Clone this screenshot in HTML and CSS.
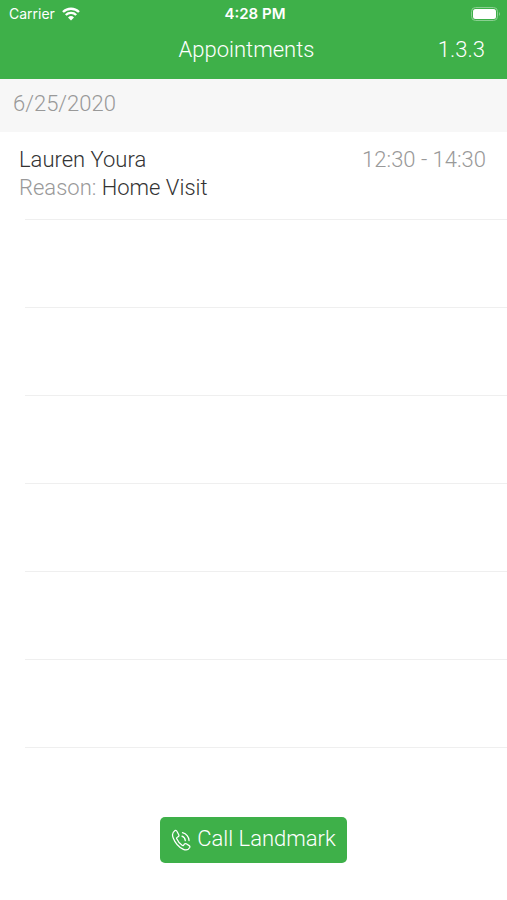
FILE: index.html
```html
<!DOCTYPE html>
<html lang="en">
<head>
  <meta charset="UTF-8" />
  <meta name="viewport" content="width=device-width, initial-scale=1.0" />
  <title>Appointments</title>
  <link rel="stylesheet" href="styles.css">
</head>
<body>
  <header>
    <div class="status-bar">
      <div class="carrier">
        <span>Carrier</span>
        <svg class="wifi" viewBox="0 0 18 14" aria-hidden="true">
          <path d="M1 5 A11.5 11.5 0 0 1 17 5" />
          <path d="M3.8 8 A7.5 7.5 0 0 1 14.2 8" />
          <path class="dot" d="M9 13.5 L6 10.4 A4.3 4.3 0 0 1 12 10.4 Z" />
        </svg>
      </div>
      <div class="clock">4:28 PM</div>
      <svg class="battery" viewBox="0 0 30 14" aria-hidden="true">
        <rect class="shell" x="0.5" y="0.5" width="26" height="13" rx="4" />
        <rect x="2" y="2" width="23" height="10" rx="2.5" />
        <path class="cap" d="M28 5 Q30 7 28 9 Z" />
      </svg>
    </div>
    <div class="title-bar">
      <h1>Appointments</h1>
      <span class="version">1.3.3</span>
    </div>
  </header>

  <main>
    <h2 class="date">6/25/2020</h2>
    <ul class="list">
      <li>
        <div class="row">
          <span>Lauren Youra</span>
          <span class="muted">12:30 - 14:30</span>
        </div>
        <div><span class="muted">Reason:</span> Home Visit</div>
      </li>
      <li></li>
      <li></li>
      <li></li>
      <li></li>
      <li></li>
      <li></li>
    </ul>
  </main>

  <footer>
    <button type="button" class="call">
      <svg class="phone" viewBox="0 0 22 24" aria-hidden="true">
        <path d="M4 2.2 C1.6 3.8 1 6.4 2.2 9.6 C4.2 14.8 8.2 19.6 13 21.8 C16.2 23.2 18.4 22 19.6 19.8 C20 19 19.8 18.4 19 17.9 L16 16 C15.2 15.5 14.5 15.7 14 16.4 L13.2 17.5 C12.7 18 12.2 18 11.6 17.6 C9 15.8 7.2 13.5 6 10.8 C5.7 10.1 5.8 9.6 6.5 9.2 L7.6 8.5 C8.3 8.1 8.5 7.4 8.1 6.6 L6.3 3 C5.8 2 5 1.6 4 2.2 Z" />
        <path d="M11.5 8 C13.6 8.8 14.8 10.4 15 12.6" />
        <path d="M12 4.2 C16 5.4 18.6 8.4 18.9 12.6" />
      </svg>
      <span>Call Landmark</span>
    </button>
  </footer>
</body>
</html>
```

FILE: styles.css
```css
* {
  box-sizing: border-box;
}

body {
  margin: 0;
  font-family: Roboto, "Liberation Sans", sans-serif;
  font-size: 22px;
  font-weight: 300;
  line-height: 28px;
  color: #333;
  background-color: #fff;
}

header {
  color: #fff;
  background-color: #3eb049;
}

.status-bar {
  display: grid;
  grid-template-columns: 1fr auto 1fr;
  align-items: center;
  height: 28px;
  padding: 0 6px 0 9px;
  font-family: Inter, sans-serif;
  font-size: 14px;
  font-weight: 400;
}

.carrier {
  display: flex;
  align-items: center;
  gap: 7px;
}

.clock {
  font-size: 15px;
  font-weight: 600;
}

.wifi {
  width: 18px;
  height: 14px;
  fill: none;
  stroke: #fff;
  stroke-width: 2.4;
}

.wifi .dot {
  fill: #fff;
  stroke: none;
}

.battery {
  justify-self: end;
  width: 30px;
  height: 14px;
  fill: #fff;
}

.battery .shell {
  fill: none;
  stroke: #8acf91;
}

.battery .cap {
  fill: #8acf91;
}

.title-bar {
  display: grid;
  grid-template-columns: 1fr auto 1fr;
  align-items: center;
  height: 51px;
  padding: 0 22px 7px 8px;
}

h1, h2 {
  margin: 0;
  font-size: 22px;
  font-weight: 300;
}

h1 {
  grid-column: 2;
}

.version {
  justify-self: end;
}

.date {
  height: 53px;
  padding: 11px 13px;
  color: #999;
  background-color: #f7f7f7;
}

.list {
  margin: 0;
  padding: 0;
  list-style: none;
}

.list li {
  position: relative;
  height: 88px;
  padding: 14px 21px 0 19px;
}

/* inset separator */
.list li::after {
  content: "";
  position: absolute;
  left: 25px;
  right: 0;
  bottom: 0;
  height: 1px;
  background-color: #efefef;
}

.row {
  display: flex;
  justify-content: space-between;
}

.muted {
  color: #999;
}

footer {
  display: flex;
  justify-content: center;
  padding: 69px 0 36px;
}

.call {
  display: flex;
  align-items: center;
  gap: 5px;
  height: 46px;
  padding: 0 11px 2px;
  font: inherit;
  color: #fff;
  background-color: #3eb049;
  border: none;
  border-radius: 5px;
  cursor: pointer;
}

.phone {
  width: 21px;
  height: 24px;
  margin-top: 2px;
  fill: none;
  stroke: #fff;
  stroke-width: 1.3;
  stroke-linecap: round;
  stroke-linejoin: round;
}
```
